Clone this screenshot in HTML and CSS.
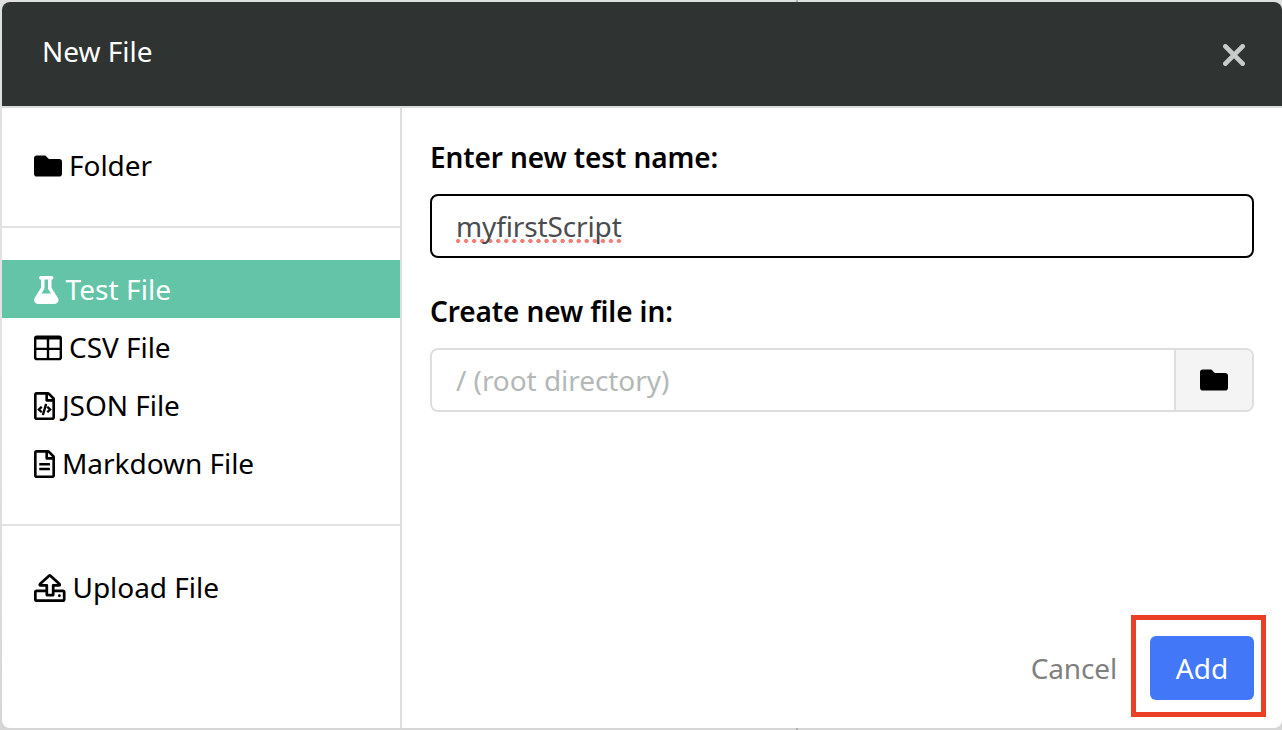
FILE: index.html
```html
<!DOCTYPE html>
<html lang="en">
<head>
<meta charset="utf-8">
<title>New File</title>
<link rel="stylesheet" href="styles.css">
</head>
<body>
<div class="dialog">
  <header class="header">
    <h1 class="title">New File</h1>
    <svg class="close" viewBox="0 0 22 22" width="22" height="22"><path d="M2.400 2.400L19.600 19.600M19.600 2.400L2.400 19.600"/></svg>
  </header>
  <div class="body">
    <nav class="sidebar">
      <div class="group group-first">
        <div class="item"><svg class="icon" viewBox="0 0 512 512" width="28" height="28"><path d="M464 128H272l-64-64H48C21.490 64 0 85.490 0 112v288c0 26.510 21.490 48 48 48h416c26.510 0 48-21.490 48-48V176c0-26.510-21.490-48-48-48z"/></svg><span>Folder</span></div>
      </div>
      <div class="group group-files">
        <div class="item active"><svg class="icon" viewBox="0 0 448 512" width="24.5" height="28"><path d="M437.200 403.500L320 215V64h8c13.300 0 24-10.700 24-24V24c0-13.300-10.700-24-24-24H120c-13.300 0-24 10.700-24 24v16c0 13.300 10.700 24 24 24h8v151L10.800 403.500C-18.500 450.600 15.300 512 70.900 512h306.200c55.700 0 89.400-61.500 60.100-108.500zM137.900 320l48.200-77.600c3.700-5.200 5.800-11.600 5.800-18.400V64h64v160c0 6.900 2.200 13.200 5.800 18.400l48.200 77.600h-172z"/></svg><span>Test File</span></div>
        <div class="item"><svg class="icon" viewBox="0 0 512 512" width="28" height="28"><path fill-rule="evenodd" d="M464 28H48C21.500 28 0 49.500 0 76v356c0 26.500 21.500 48 48 48h416c26.500 0 48-21.500 48-48V76c0-26.500-21.500-48-48-48zM234 438H56a12 12 0 0 1-12-12V292h190zm0-186H44V100h190zm234 174a12 12 0 0 1-12 12H278V292h190zm0-174H278V100h190z"/></svg><span>CSV File</span></div>
        <div class="item"><svg class="icon" viewBox="0 0 384 512" width="21" height="28"><path d="M149.900 349.100l-.2-.2-32.800-28.900 32.800-28.900c3.600-3.200 4-8.800.8-12.400l-.2-.2-17.400-18.600c-3.400-3.600-9-3.700-12.400-.4l-57.700 54.100c-3.700 3.500-3.700 9.400 0 12.800l57.700 54.100c1.600 1.500 3.800 2.400 6 2.400 2.400 0 4.800-1 6.400-2.800l17.400-18.600c3.300-3.500 3.100-9.100-.4-12.400zm220-251.200L286 14C277 5 264.800-.1 252.100-.1H48C21.500 0 0 21.500 0 48v416c0 26.500 21.500 48 48 48h288c26.500 0 48-21.500 48-48V131.900c0-12.700-5.100-25-14.100-34zM256 51.900l76.100 76.100H256zM336 464H48V48h160v104c0 13.300 10.700 24 24 24h104zM209.600 214c-4.700-1.400-9.500 1.300-10.900 6L144 408.100c-1.400 4.700 1.300 9.600 6 10.900l24.400 7.100c4.700 1.400 9.600-1.400 10.900-6L240 231.900c1.400-4.700-1.300-9.600-6-10.900zm24.500 76.900l.2.2 32.800 28.900-32.800 28.900c-3.600 3.200-4 8.800-.8 12.400l.2.2 17.400 18.600c3.300 3.500 8.900 3.700 12.400.4l57.700-54.100c3.700-3.500 3.700-9.400 0-12.800l-57.700-54.100c-3.500-3.300-9.100-3.200-12.400.4l-17.400 18.600c-3.300 3.500-3.100 9.100.4 12.400z"/></svg><span>JSON File</span></div>
        <div class="item"><svg class="icon" viewBox="0 0 384 512" width="21" height="28"><path d="M369.900 97.900L286 14C277 5 264.800-.1 252.100-.1H48C21.500 0 0 21.500 0 48v416c0 26.500 21.500 48 48 48h288c26.500 0 48-21.500 48-48V131.900c0-12.700-5.100-25-14.100-34zM256 51.900l76.100 76.100H256zM336 464H48V48h160v104c0 13.300 10.700 24 24 24h104z"/><rect x="96" y="236" width="196" height="48" rx="10"/><rect x="96" y="324" width="196" height="48" rx="10"/></svg><span>Markdown File</span></div>
      </div>
      <div class="group">
        <div class="item"><svg class="icon icon-line" viewBox="0 0 576 512" width="31.5" height="28"><path d="M276 32L110 185q-12 23 12 25H234V378q0 10 10 10H341q10 0 10-10V210H454q24-2 12-25L300 32q-12-9-24 0zM234 307H48q-24 0-24 24V464q0 24 24 24H528q24 0 24-24V331q0-24-24-24H351"/><circle class="dot" cx="464" cy="398" r="26"/></svg><span>Upload File</span></div>
      </div>
    </nav>
    <main class="content">
      <label class="label">Enter new test name:</label>
      <div class="field field-focus"><span class="misspelled">myfirstScript</span></div>
      <label class="label">Create new file in:</label>
      <div class="field field-path"><span class="placeholder">/ (root directory)</span>
        <div class="browse"><svg viewBox="0 0 512 512" width="28" height="28"><path d="M464 128H272l-64-64H48C21.490 64 0 85.490 0 112v288c0 26.510 21.490 48 48 48h416c26.510 0 48-21.490 48-48V176c0-26.510-21.490-48-48-48z"/></svg></div>
      </div>
      <div class="actions">
        <span class="cancel">Cancel</span>
        <div class="add">Add<span class="highlight"></span></div>
      </div>
    </main>
  </div>
</div>
</body>
</html>
```
FILE: styles.css
```css
* { box-sizing: border-box; }
body {
  margin: 0;
  width: 1282px;
  height: 730px;
  padding: 2px 0 2px 2px;
  overflow: hidden;
  font: 28px/38px "Noto Sans", sans-serif;
  color: #000;
  background: linear-gradient(90deg, transparent 796px, #b0b0b0 796px, #b0b0b0 798px, transparent 798px), linear-gradient(#e0e0e0, #e3e3e3 50%, #d6d6d6);
}
.dialog {
  display: flex;
  flex-direction: column;
  width: 1280px;
  height: 726px;
  border-radius: 8px;
  overflow: hidden;
  background: #fff;
}
.header {
  display: flex;
  justify-content: space-between;
  height: 106px;
  padding: 30px 37px 0 40px;
  background: #2f3332;
  border-bottom: 2px solid #d8dcdb;
  color: #fff;
}
.title { margin: 0; font-size: 28px; font-weight: 400; line-height: 38px; }
.close { margin-top: 12px; fill: none; stroke: #c9cbca; stroke-width: 4.8; stroke-linecap: round; }
.body { display: flex; flex: 1; }
.sidebar { width: 400px; border-right: 2px solid #dedede; letter-spacing: -0.04px; }
.group { padding: 32px 0; }
.group-first { height: 120px; padding-top: 28px; border-bottom: 2px solid #e2e2e2; }
.group-files { height: 298px; border-bottom: 2px solid #e2e2e2; }
.item { display: flex; align-items: center; gap: 7px; height: 58px; padding: 1px 32px 0; white-space: nowrap; }
.item span { margin-top: -1px; }
.active { background: #64c4a8; color: #fff; letter-spacing: 0.08px; }
.icon { flex: none; fill: currentColor; }
.icon-line { fill: none; stroke: currentColor; stroke-width: 50; stroke-linejoin: round; }
.icon-line .dot { fill: currentColor; stroke: none; }
.content { display: flex; flex-direction: column; flex: 1; padding: 30px 28px 28px; }
.label { height: 38px; margin-bottom: 18px; font-weight: 600; letter-spacing: -0.11px; }
.field { display: flex; align-items: center; height: 64px; padding-left: 24px; border: 2px solid #dedede; border-radius: 8px; overflow: hidden; }
.field-focus { margin-bottom: 34px; border-color: #000; color: #4a4d50; letter-spacing: -0.13px; }
.field-path { justify-content: space-between; color: #b4b8b7; letter-spacing: -0.06px; }
.misspelled { background: radial-gradient(circle, #f07e75 1.8px, transparent 2.4px) -2px 31px / 8.05px 6px repeat-x; }
.browse { display: flex; align-items: center; justify-content: center; width: 78px; height: 60px; border-left: 2px solid #dedede; background: #f4f4f4; }
.actions { display: flex; justify-content: flex-end; align-items: center; gap: 34px; margin-top: auto; }
.cancel { margin-right: -1px; color: #7f7f7f; letter-spacing: -0.15px; }
.add { position: relative; width: 104px; height: 64px; padding-top: 13px; border-radius: 6px; background: #4278f7; color: #fff; text-align: center; }
.highlight { position: absolute; left: -19px; top: -21px; width: 135px; height: 102px; border: 5px solid #ea4025; }
```
